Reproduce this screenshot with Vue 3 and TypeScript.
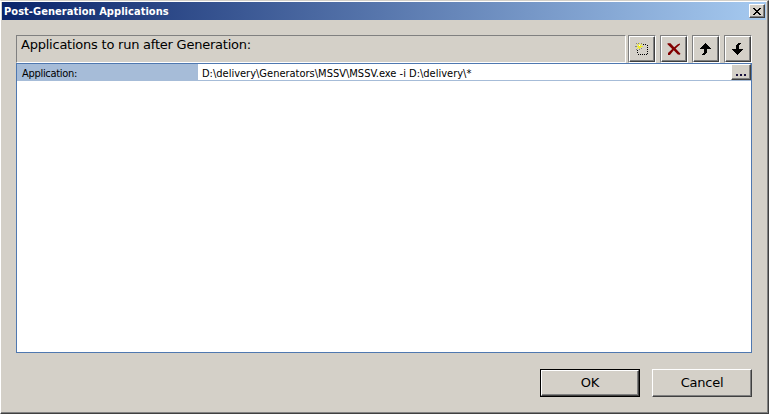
<script setup lang="ts">
import { ref } from 'vue'

interface Tool {
  id: string
  label: string
}

const tools: Tool[] = [
  { id: 'new', label: 'New' },
  { id: 'delete', label: 'Delete' },
  { id: 'up', label: 'Move up' },
  { id: 'down', label: 'Move down' },
]
const command = ref('D:\\delivery\\Generators\\MSSV\\MSSV.exe -i D:\\delivery\\*')
</script>

<template>
  <div class="window">
    <header class="titlebar">
      <span class="title">Post-Generation Applications</span>
      <button class="close raised" aria-label="Close">
        <svg width="8" height="7" viewBox="0 0 8 7" shape-rendering="crispEdges">
          <path d="M0 0h2v1h1v1h2v-1h1v-1h2v1h-1v1h-1v1h-1v1h1v1h1v1h1v1h-2v-1h-1v-1h-2v1h-1v1h-2v-1h1v-1h1v-1h1v-1h-1v-1h-1v-1h-1z" />
        </svg>
      </button>
    </header>
    <main class="content">
      <div class="toolbar">
        <div class="caption"><span class="caption-text">Applications to run after Generation:</span></div>
        <div v-for="tool in tools" :key="tool.id" class="tool-frame">
          <button class="tool raised" :aria-label="tool.label">
            <svg v-if="tool.id === 'new'" width="16" height="16" viewBox="0 0 16 16" shape-rendering="crispEdges">
              <path d="M9 3h1v1h-1zM11 3h1v1h-1zM13 4h1v1h-1zM13 6h1v1h-1zM13 8h1v1h-1zM13 10h1v1h-1zM13 12h1v1h-1zM3 9h1v1h-1zM3 11h1v1h-1zM4 13h1v1h-1zM6 13h1v1h-1zM8 13h1v1h-1zM10 13h1v1h-1zM12 13h1v1h-1z" />
              <path fill="#85857c" d="M2 2h1v1h-1zM4 2h1v1h-1zM7 2h1v1h-1zM1 5h2v1h-2zM2 8h1v1h-1zM7 7h1v1h-1zM5 8h1v1h-1z" />
              <path fill="#f2ee24" d="M5 2h1v1h-1zM3 3h1v1h-1zM7 3h1v1h-1zM4 4h3v3h-3zM3 5h1v1h-1zM7 5h2v1h-2zM3 7h1v1h-1zM5 7h1v1h-1z" />
              <path fill="#fff" d="M5 4h1v1h-1z" />
            </svg>
            <svg v-else-if="tool.id === 'delete'" width="16" height="16" viewBox="0 0 16 16">
              <path fill="#820000" d="M1.5 2.2h3l3.7 4.1 3.6-3.1 2.2-.8v1l-4.4 4.1 4.9 5.2-.7 1-2-.2-4.1-4.3-3.8 4.7H2v-1.8l4.2-4.2-4.7-4.7z" />
            </svg>
            <svg v-else-if="tool.id === 'up'" width="16" height="16" viewBox="0 0 16 16" shape-rendering="crispEdges">
              <path d="M7 2h1v1h1v1h1v1h1v1h1v1h1v1h-4v4h-1v1h-1v1h-3v-1h1v-1h1v-4h-4v-1h1v-1h1v-1h1v-1h1v-1h1z" />
            </svg>
            <svg v-else width="16" height="16" viewBox="0 0 16 16" shape-rendering="crispEdges">
              <path d="M8 2h3v1h-1v1h-1v4h4v1h-1v1h-1v1h-1v1h-1v1h-1v1h-1v-1h-1v-1h-1v-1h-1v-1h-1v-1h-1v-1h4v-4h1v-1h1z" />
            </svg>
          </button>
        </div>
      </div>
      <section class="grid">
        <div class="row">
          <div class="name"><span class="name-text">Application:</span></div>
          <div class="value"><span class="value-text">{{ command }}</span></div>
          <button class="browse raised" aria-label="Browse"><i></i><i></i><i></i></button>
        </div>
      </section>
      <footer class="actions">
        <div class="default-frame"><button class="action raised">OK</button></div>
        <button class="action cancel raised">Cancel</button>
      </footer>
    </main>
  </div>
</template>

<style>
body { margin: 0; overflow: hidden; }
</style>

<style scoped>
* { box-sizing: border-box; }
.window {
  width: 769px;
  height: 414px;
  display: flex;
  flex-direction: column;
  background: #d4d0c8;
  border: 1px solid #404040;
  border-top-color: #d4d0c8;
  border-left-color: #fff;
  box-shadow: inset -1px -1px #808080, inset 0 1px #fff;
  font-family: "DejaVu Sans", Verdana, sans-serif;
  color: #000;
  white-space: nowrap;
}
button { font: inherit; color: inherit; padding: 0; margin: 0; border-radius: 0; letter-spacing: inherit; }
svg { display: block; flex: none; }
.raised {
  display: flex;
  align-items: center;
  justify-content: center;
  background: #d4d0c8;
  border: 1px solid #404040;
  border-top-color: #fff;
  border-left-color: #fff;
  box-shadow: inset -1px -1px #808080;
}
.titlebar {
  height: 18px;
  margin: 1px 2px 0 1px;
  padding: 0 1px 0 2px;
  display: flex;
  align-items: center;
  justify-content: space-between;
  background: linear-gradient(90deg, #0a246a, #a6caf0);
}
.title {
  padding-top: 1px;
  font: bold 11px/17px "DejaVu Sans Condensed", "DejaVu Sans", Tahoma, sans-serif;
  letter-spacing: 0.05px;
  color: #fff;
}
.close { width: 16px; height: 14px; }
.content { padding: 15px 16px 0 15px; }
.toolbar { display: flex; height: 28px; gap: 4px; }
.caption {
  width: 610px;
  margin-right: -2px;
  padding: 1px 4px;
  border: 1px solid #fff;
  border-top-color: #808080;
  border-left-color: #808080;
  font-size: 13px;
  line-height: 16px;
  letter-spacing: -0.23px;
}
.tool-frame {
  width: 28px;
  padding: 0;
  border: 1px solid #fff;
  border-top-color: #808080;
  border-left-color: #808080;
}
.tool { width: 26px; height: 26px; }
.grid { height: 290px; background: #fff; border: 1px solid #4f78b0; }
.row { display: flex; height: 17px; border-bottom: 1px solid #a6bcd8; font-size: 11px; line-height: 17px; }
.name { width: 181px; height: 17px; padding: 1px 0 0 5px; background: #a6bcd8; letter-spacing: -0.3px; }
.value { flex: 1; padding: 1px 0 0 4px; }
.name-text, .value-text { font-family: "DejaVu Sans Condensed", "DejaVu Sans", Tahoma, sans-serif; }
.browse { width: 20px; height: 16px; gap: 2px; padding-top: 5px; }
.browse i { width: 2px; height: 2px; background: #18113d; }
.actions { display: flex; justify-content: flex-end; gap: 12px; padding-top: 16px; font-size: 13px; letter-spacing: -0.25px; }
.default-frame { width: 100px; height: 28px; border: 1px solid #000; }
.action { width: 98px; height: 26px; padding-bottom: 2px; }
.cancel { width: 100px; height: 28px; }
</style>
